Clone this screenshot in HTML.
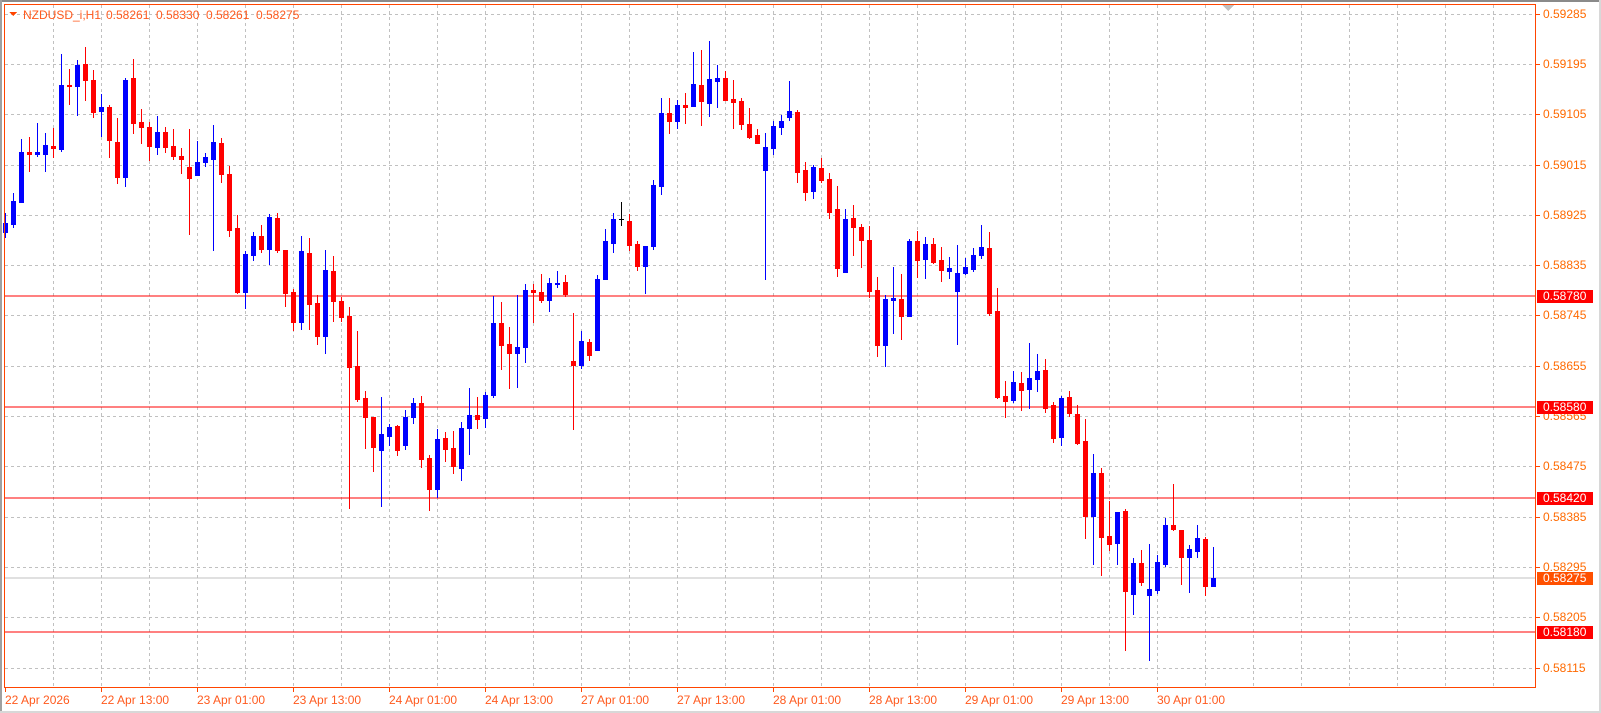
<!DOCTYPE html>
<html><head><meta charset="utf-8">
<style>
html,body{margin:0;padding:0;background:#fff;width:1601px;height:713px;overflow:hidden}
svg{display:block}
text{font-family:"Liberation Sans",sans-serif;font-size:12px}
</style></head>
<body>
<svg id="c" width="1601" height="713" xmlns="http://www.w3.org/2000/svg" shape-rendering="crispEdges">
<rect x="0" y="0" width="1601" height="713" fill="#fff"/>
<rect x="0" y="0" width="1601" height="2" fill="#8a8a8a"/>
<rect x="0" y="0" width="2" height="713" fill="#a0a0a0"/>
<rect x="0" y="711" width="1601" height="2" fill="#d8d8d8"/>
<rect x="1599" y="0" width="2" height="713" fill="#d8d8d8"/>
<g id="grid" stroke="#c0c0c0" stroke-width="1" stroke-dasharray="3,3"></g>
<g id="lines"></g>
<g id="candles"></g>
<g id="axis"></g>
<rect x="4.5" y="4.5" width="1531" height="683" fill="none" stroke="#ff4500" stroke-width="1"/>
<polygon points="1222,5 1234,5 1228,11" fill="#c0c0c0"/>
<polygon points="9,12 17,12 13,16" fill="#ff4500"/>
<text x="23" y="19" fill="#ff5a1e">NZDUSD_i,H1</text>
<text x="106" y="19" fill="#ff5a1e">0.58261</text>
<text x="156" y="19" fill="#ff5a1e">0.58330</text>
<text x="206" y="19" fill="#ff5a1e">0.58261</text>
<text x="256" y="19" fill="#ff5a1e">0.58275</text>
</svg>
<script>
var NS="http://www.w3.org/2000/svg";
function el(p,t,a,txt){var e=document.createElementNS(NS,t);for(var k in a)e.setAttribute(k,a[k]);if(txt!=null)e.textContent=txt;document.getElementById(p).appendChild(e);return e;}
for(var k=0;k<14;k++){var y=Math.round(13.7+50.3*k)+0.5;el("grid","line",{x1:5,y1:y,x2:1535,y2:y});}
for(var k=1;k<=31;k++){var x=5+48*k+0.5;el("grid","line",{x1:x,y1:5,x2:x,y2:687});}
[296,407,498,632].forEach(function(y){el("lines","rect",{x:5,y:y-0.5,width:1530,height:1,fill:"#ff0000"});});
el("lines","rect",{x:5,y:577.5,width:1530,height:1,fill:"#c0c0c0"});
var D=[
"b 213 237 223 232","b 193 227 201 224","b 139 202 152 202","r 137 171 152 154","b 123 156 152 154","b 133 171 145 154","r 128 157 146 148","b 54 151 85 149","r 69 104 85 86","b 60 115 65 86",
"r 47 100 64 80","r 70 117 80 112","b 94 136 107 111","r 105 157 107 140","r 118 183 142 177","b 78 186 80 177","r 59 133 78 123","r 109 143 122 127","r 122 160 127 146","b 116 154 132 147",
"r 127 152 132 147","r 129 159 146 156","r 148 173 156 159","r 129 234 167 178","b 141 175 162 175","b 153 166 157 162","b 125 250 142 159","r 138 182 143 174","r 166 236 174 230","r 215 293 228 292",
"b 251 308 254 292","b 232 260 236 255","r 225 252 236 249","b 214 264 217 249","r 213 252 218 250","r 250 306 250 293","r 289 330 292 322","b 236 329 251 322","r 238 329 253 304","r 295 344 303 336",
"b 250 353 270 336","r 256 321 271 301","r 297 321 301 317","r 307 508 316 367","r 331 401 366 399","r 391 448 398 417","r 417 471 417 447","b 397 506 434 450","b 424 445 427 436","r 425 455 426 450",
"b 410 449 417 445","b 398 423 403 417","r 396 467 403 459","r 455 510 458 489","b 429 497 439 489","r 432 461 438 449","r 431 473 448 466","b 422 480 428 468","b 388 454 415 428","r 397 428 415 419",
"b 392 427 395 418","b 296 397 323 395","r 302 369 323 345","r 327 388 344 353","b 295 387 347 353","b 284 362 290 347","r 284 322 290 292","r 274 302 292 300","b 278 311 283 300","b 271 287 283 284",
"r 275 296 282 294","r 313 429 361 365","b 331 368 341 365","r 339 360 342 355","b 275 350 279 350","b 229 279 241 279","b 213 252 219 243","k 202 225 219 220","r 214 250 221 245","r 241 270 244 266",
"b 246 293 246 266","b 180 249 185 246","b 98 194 113 186","r 98 133 113 121","b 100 128 105 121","r 93 123 105 107","b 52 106 84 106","r 50 125 85 101","b 41 116 79 103","b 65 107 78 81",
"r 71 100 78 100","r 80 128 99 102","r 98 129 101 124","r 108 138 124 137","r 129 143 135 143","b 133 279 147 170","b 121 154 126 148","b 115 134 121 127","b 81 120 111 117","r 110 182 112 172",
"r 162 200 170 192","b 165 198 167 191","r 158 182 168 180","r 173 218 179 212","r 186 276 209 268","b 209 272 219 272","r 205 255 218 227","r 224 267 227 240","r 226 297 240 291","r 277 356 290 345",
"b 295 366 299 345","b 267 333 298 300","r 274 339 299 316","b 239 316 241 316","r 231 277 241 260","b 237 278 244 259","r 238 263 244 262","r 247 281 260 270","b 257 278 268 271","b 245 344 273 291",
"b 258 274 267 273","b 248 271 255 269","b 225 258 247 255","r 232 315 248 313","r 288 398 311 397","r 381 417 396 401","b 371 402 382 400","r 372 410 383 390","b 343 408 378 389","b 354 391 371 379",
"r 359 412 370 408","r 402 442 405 438","b 396 445 398 437","r 391 416 397 413","r 405 444 414 443","r 419 538 441 516","b 454 564 473 516","r 468 575 473 537","r 501 550 536 544","b 512 564 512 543",
"r 509 650 511 591","b 558 614 563 594","r 550 585 563 582","b 544 660 589 595","b 555 593 562 590","b 518 566 525 564","r 484 530 525 529","r 530 584 530 557","b 545 592 549 557","b 525 557 538 551",
"r 537 595 539 586","b 547 586 578 586"];
var col={r:"#ff0000",b:"#0000ff",k:"#000000"};
D.forEach(function(s,i){var a=s.split(" ");var c=col[a[0]],h=+a[1],l=+a[2],t=+a[3],bt=+a[4];var p=5+8*i;
 el("candles","rect",{x:p,y:h,width:1,height:Math.max(1,l-h+1),fill:c});
 if(a[0]=="k"){el("candles","rect",{x:p-2,y:t,width:5,height:1,fill:c});}
 else el("candles","rect",{x:p-2,y:t,width:5,height:Math.max(2,bt-t+1),fill:c});
});
var vals=["0.59285","0.59195","0.59105","0.59015","0.58925","0.58835","0.58745","0.58655","0.58565","0.58475","0.58385","0.58295","0.58205","0.58115"];
vals.forEach(function(v,k){var y=Math.round(13.7+50.3*k);
 el("axis","rect",{x:1536,y:y,width:4,height:1,fill:"#ff4500"});
 el("axis","text",{x:1543,y:y+4,fill:"#ff6a00"},v);});
var tl=["22 Apr 2026","22 Apr 13:00","23 Apr 01:00","23 Apr 13:00","24 Apr 01:00","24 Apr 13:00","27 Apr 01:00","27 Apr 13:00","28 Apr 01:00","28 Apr 13:00","29 Apr 01:00","29 Apr 13:00","30 Apr 01:00"];
tl.forEach(function(t,k){var x=5+96*k;
 el("axis","rect",{x:x,y:688,width:1,height:4,fill:"#ff4500"});
 el("axis","text",{x:x,y:704,fill:"#ff5a1e"},t);});
[[296,"0.58780","#ff0000"],[407,"0.58580","#ff0000"],[498,"0.58420","#ff0000"],[632,"0.58180","#ff0000"],[578,"0.58275","#ff5000"]].forEach(function(b){
 el("axis","rect",{x:1537,y:b[0]-6,width:56,height:13,fill:b[2]});
 el("axis","text",{x:1543,y:b[0]+4,fill:"#ffffff"},b[1]);});
</script>
</body></html>
